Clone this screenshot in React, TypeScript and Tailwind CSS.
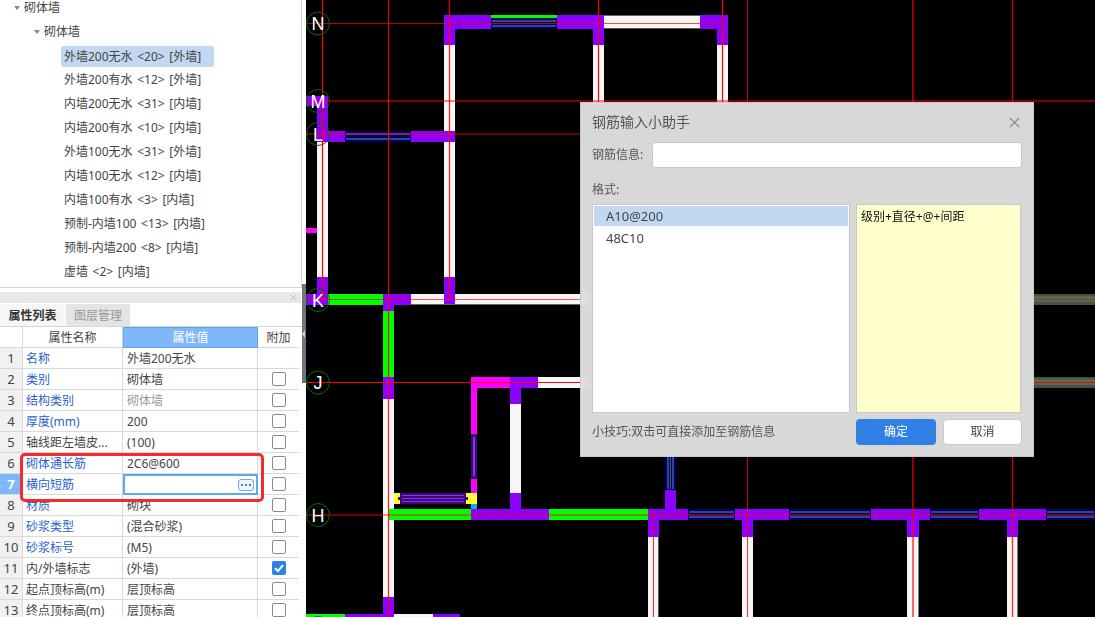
import { X } from "lucide-react";

const font = "font-['Noto_Sans','Noto_Sans_CJK_SC',sans-serif]";

const treeItems = [
  "外墙200无水 <20> [外墙]",
  "外墙200有水 <12> [外墙]",
  "内墙200无水 <31> [内墙]",
  "内墙200有水 <10> [内墙]",
  "外墙100无水 <31> [外墙]",
  "内墙100无水 <12> [内墙]",
  "内墙100有水 <3> [内墙]",
  "预制-内墙100 <13> [内墙]",
  "预制-内墙200 <8> [内墙]",
  "虚墙 <2> [内墙]",
];

type Row = { name: string; value: string; blue?: boolean; muted?: boolean; box?: boolean; checked?: boolean };

const rows: Row[] = [
  { name: "名称", value: "外墙200无水", blue: true, box: false },
  { name: "类别", value: "砌体墙", blue: true },
  { name: "结构类别", value: "砌体墙", blue: true, muted: true },
  { name: "厚度(mm)", value: "200", blue: true },
  { name: "轴线距左墙皮...", value: "(100)" },
  { name: "砌体通长筋", value: "2C6@600", blue: true },
  { name: "横向短筋", value: "", blue: true },
  { name: "材质", value: "砌块", blue: true },
  { name: "砂浆类型", value: "(混合砂浆)", blue: true },
  { name: "砂浆标号", value: "(M5)", blue: true },
  { name: "内/外墙标志", value: "(外墙)", checked: true },
  { name: "起点顶标高(m)", value: "层顶标高" },
  { name: "终点顶标高(m)", value: "层顶标高" },
];

const PURPLE = "#8c00ff";
const GREEN = "#00ff00";
const WHITE = "#f6f6f6";
const MAGENTA = "#ff00ff";
const YELLOW = "#ffff33";

// [x1, y1, x2, y2, colour], in page coordinates
const walls: [number, number, number, number, string][] = [
  // N
  [444, 15, 491, 29, PURPLE],
  [557, 15, 604, 29, PURPLE],
  [604, 15, 700, 29, WHITE],
  [700, 15, 728, 29, PURPLE],
  [491, 15, 557, 18, GREEN],
  [444, 29, 455, 45, PURPLE],
  [444, 45, 455, 277, WHITE],
  [444, 277, 455, 305, PURPLE],
  [593, 29, 604, 45, PURPLE],
  [593, 45, 604, 104, WHITE],
  [717, 29, 728, 45, PURPLE],
  [717, 45, 728, 104, WHITE],
  // M, L
  [306, 96, 328, 106, PURPLE],
  [317, 106, 328, 142, PURPLE],
  [317, 142, 328, 277, WHITE],
  [317, 277, 328, 305, PURPLE],
  [317, 131, 345, 142, PURPLE],
  [411, 131, 455, 142, PURPLE],
  [306, 228, 317, 233, MAGENTA],
  // K
  [306, 294, 328, 305, PURPLE],
  [328, 294, 383, 305, GREEN],
  [383, 294, 411, 305, PURPLE],
  [411, 294, 444, 305, WHITE],
  [455, 294, 590, 305, WHITE],
  [383, 305, 394, 311, PURPLE],
  [383, 311, 394, 377, GREEN],
  [383, 377, 394, 399, PURPLE],
  [383, 399, 394, 597, WHITE],
  [383, 597, 394, 617, PURPLE],
  // J
  [471, 377, 510, 388, MAGENTA],
  [510, 377, 538, 388, PURPLE],
  [538, 377, 590, 388, WHITE],
  [471, 388, 477, 434, MAGENTA],
  [471, 479, 477, 493, MAGENTA],
  [471, 493, 477, 504, YELLOW],
  [471, 504, 477, 510, "#00b0f0"],
  [510, 388, 521, 404, PURPLE],
  [510, 404, 521, 493, WHITE],
  [510, 493, 521, 510, PURPLE],
  [394, 493, 400, 504, YELLOW],
  [466, 493, 471, 504, YELLOW],
  // H
  [389, 509, 471, 520, GREEN],
  [471, 509, 549, 520, PURPLE],
  [549, 509, 648, 520, GREEN],
  [648, 509, 688, 520, PURPLE],
  [735, 509, 789, 520, PURPLE],
  [871, 509, 930, 520, PURPLE],
  [979, 509, 1046, 520, PURPLE],
  [665, 490, 676, 509, PURPLE],
  [648, 520, 659, 537, PURPLE],
  [648, 537, 659, 617, WHITE],
  [742, 520, 753, 537, PURPLE],
  [742, 537, 753, 617, WHITE],
  [907, 520, 919, 537, PURPLE],
  [907, 537, 919, 617, WHITE],
  [1007, 520, 1018, 537, PURPLE],
  [1007, 537, 1018, 617, WHITE],
  // G
  [306, 614, 345, 617, GREEN],
  [345, 614, 394, 617, PURPLE],
  [394, 614, 433, 617, WHITE],
  [433, 614, 460, 617, PURPLE],
];

// window blocks, running along x
const windowsH: [number, number, number, number][] = [
  [491, 18, 557, 29],
  [345, 131, 411, 142],
  [688, 509, 735, 520],
  [789, 509, 871, 520],
  [930, 509, 979, 520],
  [1046, 509, 1095, 520],
];

const lines: [number, number, number, number, number, number][] = [
  // vertical
  [322.5, 0, 322.5, 300, 1.2, 1],
  [388.5, 0, 388.5, 617, 1.2, 0.9],
  [449.5, 0, 449.5, 300, 1.2, 0.9],
  [598.5, 0, 598.5, 104, 1.2, 1],
  [722.5, 0, 722.5, 104, 1.2, 1],
  [747.5, 0, 747.5, 104, 1, 0.8],
  [913, 0, 913, 104, 2, 0.58],
  [1012.5, 0, 1012.5, 104, 1.4, 0.8],
  [653.5, 510, 653.5, 617, 1, 0.85],
  [747.5, 457, 747.5, 617, 1, 0.8],
  [913, 457, 913, 617, 2, 0.58],
  [1012.5, 457, 1012.5, 617, 1.4, 0.8],
  // horizontal
  [306, 23.5, 723, 23.5, 1, 0.7],
  [306, 101, 1095, 101, 2, 0.5],
  [306, 134, 590, 134, 1.5, 0.55],
  [306, 299.5, 1095, 299.5, 1, 0.65],
  [306, 382.5, 1095, 382.5, 1, 1],
  [306, 515, 1095, 515, 1.5, 0.6],
];

const axes: [string, number][] = [
  ["N", 23.5],
  ["M", 101],
  ["L", 134],
  ["K", 300],
  ["J", 382.5],
  ["H", 515],
  ["G", 628],
];

function Drawing() {
  return (
    <svg viewBox="306 0 789 617" className="block w-[789px] h-[617px]">
      <rect x="306" y="0" width="789" height="617" fill="#000" />
      {walls.map(([x1, y1, x2, y2, c], i) => (
        <rect key={i} x={x1} y={y1} width={x2 - x1} height={y2 - y1} fill={c} />
      ))}
      {/* grey edge under the white walls */}
      <rect x="604" y="28" width="96" height="1" fill="#555" />
      <rect x="604" y="15" width="96" height="1" fill="#666" />
      <rect x="411" y="304" width="169" height="1" fill="#666" />
      <rect x="1017" y="537" width="1" height="80" fill="#777" />
      <rect x="918" y="537" width="1" height="80" fill="#777" />
      <rect x="658" y="537" width="1" height="80" fill="#555" />
      {windowsH.map(([x1, y1, x2, y2], i) => (
        <g key={i}>
          <rect x={x1} y={y1} width={x2 - x1} height={y2 - y1} fill="#000068" />
          <rect x={x1 + 1} y={y1 + 2} width={x2 - x1 - 2} height="2" fill="#2f4a80" />
          <rect x={x1 + 1} y={y2 - 4} width={x2 - x1 - 2} height="2" fill="#2f4a80" />
        </g>
      ))}
      {/* window on J going down */}
      <rect x="665" y="457" width="11" height="33" fill="#000068" />
      <rect x="667" y="457" width="2" height="32" fill="#2f4a80" />
      <rect x="670" y="457" width="1" height="32" fill="#3a5a70" />
      <rect x="672" y="457" width="2" height="32" fill="#2f4a80" />
      {/* purple windows */}
      <rect x="400" y="493" width="66" height="11" fill="#3c0a78" />
      <rect x="398" y="497" width="70" height="3" fill="#3c0a78" />
      <rect x="402" y="495" width="62" height="1" fill="#8c30f0" />
      <rect x="402" y="498" width="62" height="1" fill="#8c30f0" />
      <rect x="402" y="501" width="62" height="1" fill="#8c30f0" />
      <rect x="471" y="434" width="6" height="45" fill="#3c0a78" />
      <rect x="473" y="437" width="2" height="39" fill="#8c30f0" />
      {/* faded windows to the right of the dialog */}
      <rect x="1034" y="294" width="61" height="11" fill="#4a4f4a" />
      <rect x="1034" y="296" width="61" height="6" fill="#4f7050" />
      <rect x="1034" y="377" width="61" height="11" fill="#4a4f4a" />
      <rect x="1034" y="379" width="61" height="6" fill="#4f7050" />
      {lines.map(([x1, y1, x2, y2, w, o], i) => (
        <line key={i} x1={x1} y1={y1} x2={x2} y2={y2} stroke="#ff0000" strokeWidth={w} strokeOpacity={o} />
      ))}
      {axes.map(([label, y]) => (
        <g key={label}>
          <circle cx="318" cy={y} r="11.5" fill="none" stroke="#0a6a0a" strokeWidth="1" />
          <text x="318" y={y + 6.5} textAnchor="middle" fontSize="18" fill="#fff" fontFamily="'Liberation Sans', sans-serif">
            {label}
          </text>
        </g>
      ))}
    </svg>
  );
}

function Dialog() {
  return (
    <div className="absolute left-[274px] top-[102px] w-[454px] h-[355px] flex flex-col border border-[#c9c9c9] bg-[#e4e4e4]/95 backdrop-blur-md px-[11px] text-xs text-[#555]">
      <div className="flex items-center justify-between h-[38px] text-sm">
        <span>钢筋输入小助手</span>
        <X className="w-[17px] h-[17px] mr-[-1px] text-[#888]" strokeWidth={1.5} />
      </div>
      <div className="flex items-center gap-[9px] mt-[1px]">
        <span className="w-[51px] whitespace-nowrap">钢筋信息:</span>
        <div className="flex-1 h-[26px] bg-white border border-[#c9c9c9] rounded-[3px]" />
      </div>
      <div className="mt-[13px] h-[18px] leading-[18px]">格式:</div>
      <div className="flex gap-[6px] mt-[5px] h-[209px]">
        <div className="w-[258px] bg-white border border-[#c9c9c9] p-[1px] text-[13px] text-[#444]">
          <div className="h-[20px] leading-[20px] pl-[12px] bg-[#c1d8f0]">A10@200</div>
          <div className="h-[22px] leading-[22px] pl-[12px] mt-[1px]">48C10</div>
        </div>
        <div className="w-[165px] bg-[#ffffcd] border border-[#c9c9c9] pl-[4px] pt-[2px] h-[209px] leading-[20px] text-[#111]">
          级别+直径+@+间距
        </div>
      </div>
      <div className="flex items-center mt-[6px]">
        <span className="w-[264px] whitespace-nowrap">小技巧:双击可直接添加至钢筋信息</span>
        <div className="w-[80px] h-[26px] leading-[26px] text-center bg-[#2f80e4] text-white rounded-[4px]">确定</div>
        <div className="w-[79px] h-[26px] leading-[24px] text-center bg-white border border-[#c9c9c9] rounded-[4px] ml-[7px] text-[#444]">
          取消
        </div>
      </div>
    </div>
  );
}

function PropertyTable() {
  return (
    <div className="w-[299px]">
      <div className="flex h-[21px] leading-[21px] text-center text-[#444]">
        <div className="w-[23px] border-r border-b border-[#d9d9d9] bg-white" />
        <div className="w-[100px] border-r border-b border-[#d9d9d9] bg-white">属性名称</div>
        <div className="w-[135px] bg-[#7fb8f8] text-white border border-[#5ea5ee] leading-[19px]">属性值</div>
        <div className="w-[41px] border-b border-[#d9d9d9] bg-white">附加</div>
      </div>
      {rows.map((r, i) => {
        const active = i === 6;
        return (
          <div key={r.name} className="flex h-[21px] leading-[21px] text-[#444]">
            <div
              className={
                active
                  ? "w-[23px] text-center text-[13px] font-bold border-r border-b border-[#d9d9d9] bg-[#7fb8f8] text-white"
                  : "w-[23px] text-center text-[13px] border-r border-b border-[#d9d9d9] bg-[#f1f1f1]"
              }
            >
              {i + 1}
            </div>
            <div className={r.blue ? "w-[100px] pl-[3px] border-r border-b border-[#d9d9d9] text-[#2a5fd0] whitespace-nowrap" : "w-[100px] pl-[3px] border-r border-b border-[#d9d9d9] whitespace-nowrap"}>
              {r.name}
            </div>
            {active ? (
              <div className="w-[135px] border-2 border-[#5fa8f0] flex items-center justify-end pr-[2px] bg-white">
                <div className="w-[16px] h-[12px] rounded-[3px] border border-[#6aa8ee] bg-[#eef5ff] flex items-center justify-center gap-[2px]">
                  <span className="w-[2px] h-[2px] bg-[#2f80e4]" />
                  <span className="w-[2px] h-[2px] bg-[#2f80e4]" />
                  <span className="w-[2px] h-[2px] bg-[#2f80e4]" />
                </div>
              </div>
            ) : (
              <div className={r.muted ? "w-[135px] pl-[4px] border-r border-b border-[#d9d9d9] text-[#999]" : "w-[135px] pl-[4px] border-r border-b border-[#d9d9d9]"}>
                {r.value}
              </div>
            )}
            <div className="w-[41px] border-b border-[#d9d9d9] flex items-center justify-center">
              {r.box === false ? null : r.checked ? (
                <div className="w-[14px] h-[14px] rounded-[2px] bg-[#2f80e4] flex items-center justify-center">
                  <svg viewBox="0 0 14 14" className="w-[14px] h-[14px]">
                    <path d="M3 7.2 L6 10 L11 4.2" fill="none" stroke="#fff" strokeWidth="2" />
                  </svg>
                </div>
              ) : (
                <div className="w-[14px] h-[14px] rounded-[2px] border border-[#8a8a8a] bg-white" />
              )}
            </div>
          </div>
        );
      })}
    </div>
  );
}

export default function App() {
  return (
    <div className={`w-[1095px] h-[617px] flex overflow-hidden bg-white text-xs ${font}`}>
      <aside className="relative w-[302px] h-[617px] flex flex-col overflow-hidden">
        <div className="h-[288px] shrink-0 border-r border-b border-[#d4d4d4] text-[#444] overflow-hidden">
          <div className="h-[16px] leading-[16px] flex items-center pl-[14px] gap-[4px]">
            <span className="w-0 h-0 border-x-[3.5px] border-x-transparent border-t-[4px] border-t-[#888]" />
            <span>砌体墙</span>
          </div>
          <div className="h-[24px] mt-[4px] flex items-center pl-[34px] gap-[4px]">
            <span className="w-0 h-0 border-x-[3.5px] border-x-transparent border-t-[4px] border-t-[#888]" />
            <span>砌体墙</span>
          </div>
          <div className="pl-[61px] [word-spacing:1.5px]">
            {treeItems.map((t, i) => (
              <div key={t} className="h-[24px] flex items-center">
                <span className={i === 0 ? "w-[153px] h-[21px] leading-[21px] pl-[3px] bg-[#c1d8f0] rounded-[2px] whitespace-pre" : "pl-[3px] whitespace-pre"}>
                  {t}
                </span>
              </div>
            ))}
          </div>
        </div>
        <div className="h-[4px] shrink-0" />
        <div className="h-[11px] shrink-0 bg-[#e8e8e8] flex items-center justify-end pr-[3px] mr-[1px]">
          <X className="w-[9px] h-[9px] text-[#aaa]" strokeWidth={2} />
        </div>
        <div className="flex h-[23px] shrink-0 mt-[1px] border-b border-[#d4d4d4]">
          <div className="w-[65px] leading-[23px] text-center font-semibold text-[#333] bg-[#f6f6f6]">属性列表</div>
          <div className="w-[65px] leading-[23px] text-center text-[#999] bg-[#e4e4e4] border-l border-white">图层管理</div>
        </div>
        <PropertyTable />
        {/* red annotation over rows 6 and 7 */}
        <div className="absolute left-[20px] top-[453px] w-[244px] h-[49px] border-[3px] border-[#f52a2a] rounded-[5px] pointer-events-none" />
      </aside>
      <div className="w-[4px] flex flex-col shrink-0 bg-white">
        <div className="h-[284px]" />
        <div className="h-[99px] bg-[#6d7680] flex items-center">
          <span className="w-0 h-0 border-y-[4px] border-y-transparent border-r-[3px] border-r-[#cfd3d8]" />
        </div>
      </div>
      <main className="relative flex-1 h-[617px] overflow-hidden">
        <Drawing />
        <Dialog />
      </main>
    </div>
  );
}
